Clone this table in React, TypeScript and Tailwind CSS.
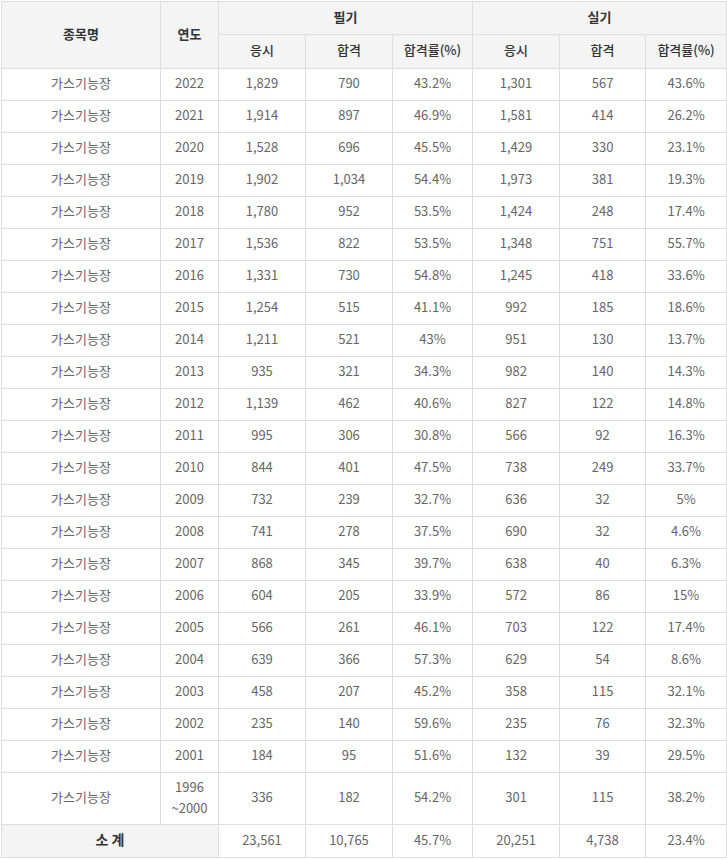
const rows = [
  ["2022", "1,829", "790", "43.2%", "1,301", "567", "43.6%"],
  ["2021", "1,914", "897", "46.9%", "1,581", "414", "26.2%"],
  ["2020", "1,528", "696", "45.5%", "1,429", "330", "23.1%"],
  ["2019", "1,902", "1,034", "54.4%", "1,973", "381", "19.3%"],
  ["2018", "1,780", "952", "53.5%", "1,424", "248", "17.4%"],
  ["2017", "1,536", "822", "53.5%", "1,348", "751", "55.7%"],
  ["2016", "1,331", "730", "54.8%", "1,245", "418", "33.6%"],
  ["2015", "1,254", "515", "41.1%", "992", "185", "18.6%"],
  ["2014", "1,211", "521", "43%", "951", "130", "13.7%"],
  ["2013", "935", "321", "34.3%", "982", "140", "14.3%"],
  ["2012", "1,139", "462", "40.6%", "827", "122", "14.8%"],
  ["2011", "995", "306", "30.8%", "566", "92", "16.3%"],
  ["2010", "844", "401", "47.5%", "738", "249", "33.7%"],
  ["2009", "732", "239", "32.7%", "636", "32", "5%"],
  ["2008", "741", "278", "37.5%", "690", "32", "4.6%"],
  ["2007", "868", "345", "39.7%", "638", "40", "6.3%"],
  ["2006", "604", "205", "33.9%", "572", "86", "15%"],
  ["2005", "566", "261", "46.1%", "703", "122", "17.4%"],
  ["2004", "639", "366", "57.3%", "629", "54", "8.6%"],
  ["2003", "458", "207", "45.2%", "358", "115", "32.1%"],
  ["2002", "235", "140", "59.6%", "235", "76", "32.3%"],
  ["2001", "184", "95", "51.6%", "132", "39", "29.5%"],
];

const td = "border border-[#dddddd] pb-[3px] text-center align-middle";
const th = "border border-[#dddddd] bg-[#f4f4f4] pb-[3px] text-center align-middle font-bold text-[#333333]";

export default function App() {
  return (
    <div className="bg-white pl-[1px] pt-[1px] font-['Noto_Sans_CJK_KR','Noto_Sans',sans-serif] text-[13px] text-[#666666]">
      <table className="w-[725px] table-fixed border-collapse">
        <colgroup>
          <col className="w-[159px]" />
          <col className="w-[58px]" />
          <col className="w-[87px]" />
          <col className="w-[87px]" />
          <col className="w-[80px]" />
          <col className="w-[87px]" />
          <col className="w-[86px]" />
          <col className="w-[81px]" />
        </colgroup>
        <thead>
          <tr className="h-[33px]">
            <th rowSpan={2} className={th}>종목명</th>
            <th rowSpan={2} className={th}>연도</th>
            <th colSpan={3} className={th}>필기</th>
            <th colSpan={3} className={th}>실기</th>
          </tr>
          <tr className="h-[34px]">
            <th className={`${th} font-medium`}>응시</th>
            <th className={`${th} font-medium`}>합격</th>
            <th className={`${th} font-medium`}>합격률(%)</th>
            <th className={`${th} font-medium`}>응시</th>
            <th className={`${th} font-medium`}>합격</th>
            <th className={`${th} font-medium`}>합격률(%)</th>
          </tr>
        </thead>
        <tbody>
          {rows.map((r) => (
            <tr key={r[0]} className="h-[32px]">
              <td className={td}>가스기능장</td>
              {r.map((v, i) => (
                <td key={i} className={td}>{v}</td>
              ))}
            </tr>
          ))}
          <tr className="h-[52px]">
            <td className={td}>가스기능장</td>
            <td className={`${td} leading-[21px]`}>1996<br />~2000</td>
            <td className={td}>336</td>
            <td className={td}>182</td>
            <td className={td}>54.2%</td>
            <td className={td}>301</td>
            <td className={td}>115</td>
            <td className={td}>38.2%</td>
          </tr>
          <tr className="h-[33px]">
            <td colSpan={2} className={`${th} text-[14px] text-[#222222]`}>소 계</td>
            <td className={td}>23,561</td>
            <td className={td}>10,765</td>
            <td className={td}>45.7%</td>
            <td className={td}>20,251</td>
            <td className={td}>4,738</td>
            <td className={td}>23.4%</td>
          </tr>
        </tbody>
      </table>
    </div>
  );
}
